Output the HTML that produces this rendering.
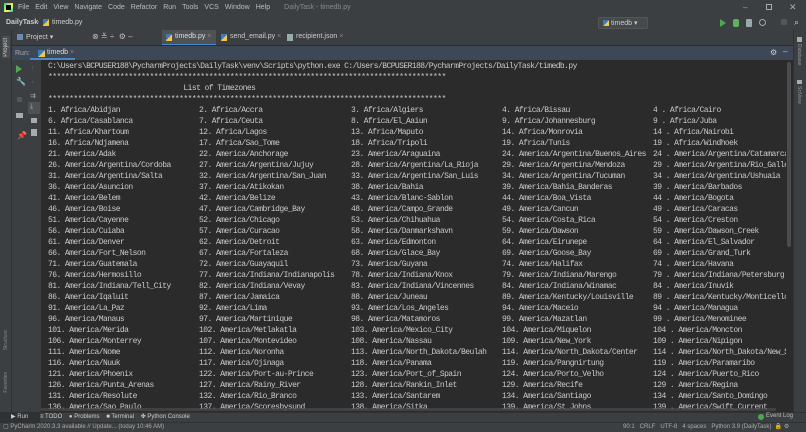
<!DOCTYPE html>
<html><head><meta charset="utf-8"><style>
*{margin:0;padding:0;box-sizing:border-box}
body{width:806px;height:432px;overflow:hidden;background:#3c3f41;font-family:"Liberation Sans",sans-serif;font-size:7px;color:#bbb;position:relative}
.abs{position:absolute}
.menu span{margin-right:6px}
#con{position:absolute;left:41px;top:60px;width:752px;height:352px;background:#2b2b2b;overflow:hidden}
.ln{position:absolute;left:7px;white-space:pre;font-family:"Liberation Mono",monospace;font-size:8px;letter-spacing:-0.57px;color:#c9c9c9;line-height:11px}
.r{position:absolute;height:11px;left:0;width:800px}
.r span{position:absolute;white-space:pre;font-family:"Liberation Mono",monospace;font-size:8px;letter-spacing:-0.57px;color:#c9c9c9;line-height:11px}
.c1{left:7px}.c2{left:158px}.c3{left:310px}.c4{left:461px}.c5{left:612px}
</style></head><body>
<div class="abs" style="left:0;top:0;width:806px;height:15px;background:#3c3f41"></div>
<div class="abs" style="left:4px;top:3px;width:9px;height:9px;background:linear-gradient(135deg,#21d789,#fcf84a 60%,#07c3f2)"><div style="margin:2px;width:5px;height:5px;background:#000"></div></div>
<div class="abs menu" style="left:18px;top:4px;color:#bbb">
<span>File</span><span>Edit</span><span>View</span><span>Navigate</span><span>Code</span><span>Refactor</span><span>Run</span><span>Tools</span><span>VCS</span><span>Window</span><span>Help</span><span style="color:#888;margin-left:8px">DailyTask - timedb.py</span></div>
<div class="abs" style="left:743px;top:3px;color:#aaa;font-size:8px">–</div>
<div class="abs" style="left:766px;top:4px;width:6px;height:6px;border:1px solid #aaa"></div>
<div class="abs" style="left:789px;top:2px;color:#aaa;font-size:9px">✕</div>
<div class="abs" style="left:6px;top:19px;color:#ccc;font-weight:bold">DailyTask</div>
<div class="abs" style="left:37px;top:19px;color:#888">›</div>
<div class="abs" style="left:43px;top:19px;width:6px;height:7px;background:linear-gradient(135deg,#3d7ab8 50%,#f3c744 50%)"></div>
<div class="abs" style="left:52px;top:19px;color:#ccc">timedb.py</div>
<div class="abs" style="left:598px;top:17px;width:50px;height:12px;border:1px solid #555;background:#45494a;border-radius:2px"></div>
<div class="abs" style="left:603px;top:20px;width:6px;height:6px;background:linear-gradient(135deg,#3d7ab8 50%,#f3c744 50%)"></div>
<div class="abs" style="left:611px;top:19px;color:#ccc">timedb ▾</div>
<div class="abs" style="left:720px;top:19px;width:0;height:0;border-left:6px solid #4fa84f;border-top:4px solid transparent;border-bottom:4px solid transparent"></div>
<div class="abs" style="left:733px;top:19px;width:6px;height:8px;background:#5fb35f;border-radius:2px"></div>
<div class="abs" style="left:746px;top:19px;width:6px;height:8px;background:#9aa;border-radius:1px"></div>
<div class="abs" style="left:759px;top:19px;width:7px;height:7px;border:1px solid #9aa;border-radius:50%"></div>
<div class="abs" style="left:781px;top:19px;width:6px;height:6px;background:#555"></div>
<div class="abs" style="left:794px;top:17px;color:#ccc;font-size:9px">⌕</div>
<div class="abs" style="left:0;top:30px;width:12px;height:402px;background:#3c3f41;border-right:1px solid #2f3133"></div>
<div class="abs" style="left:2px;top:36px;width:8px;height:22px;background:#4a4e52"></div>
<div class="abs" style="left:3px;top:38px;color:#ccc;font-size:6px;writing-mode:vertical-rl;transform:rotate(180deg)">Project</div>
<div class="abs" style="left:17px;top:34px;width:6px;height:6px;background:#6a8ab8"></div>
<div class="abs" style="left:26px;top:33px;color:#ccc">Project ▾</div>
<div class="abs" style="left:92px;top:32px;color:#bbb;font-size:8px">⊗ ≚ ÷ &nbsp;⚙ –</div>
<div class="abs" style="left:162px;top:30px;width:54px;height:16px;background:#4e5254;border-bottom:2px solid #4a88c7"></div>
<div class="abs" style="left:166px;top:34px;width:6px;height:7px;background:linear-gradient(135deg,#3d7ab8 50%,#f3c744 50%)"></div>
<div class="abs" style="left:175px;top:33px;color:#ddd">timedb.py <span style="color:#888">×</span></div>
<div class="abs" style="left:221px;top:34px;width:6px;height:7px;background:linear-gradient(135deg,#3d7ab8 50%,#f3c744 50%)"></div>
<div class="abs" style="left:230px;top:33px;color:#ccc">send_email.py <span style="color:#888">×</span></div>
<div class="abs" style="left:287px;top:34px;width:6px;height:7px;background:#9aa"></div>
<div class="abs" style="left:296px;top:33px;color:#ccc">recipient.json <span style="color:#888">×</span></div>
<div class="abs" style="left:12px;top:45px;width:781px;height:1px;background:#2b2b2b"></div>
<div class="abs" style="left:12px;top:46px;width:781px;height:14px;background:#3d4756"></div>
<div class="abs" style="left:15px;top:50px;color:#aaa">Run:</div>
<div class="abs" style="left:38px;top:50px;width:7px;height:7px;background:linear-gradient(135deg,#3d7ab8 50%,#f3c744 50%)"></div>
<div class="abs" style="left:47px;top:49px;color:#ddd">timedb <span style="color:#888">×</span></div>
<div class="abs" style="left:30px;top:58px;width:45px;height:2px;background:#4a88c7"></div>
<div class="abs" style="left:770px;top:48px;color:#ccc;font-size:8px">⚙</div>
<div class="abs" style="left:783px;top:47px;color:#ccc;font-size:8px">–</div>
<div class="abs" style="left:793px;top:30px;width:13px;height:382px;background:#3c3f41;border-left:1px solid #2f3133"></div>
<div class="abs" style="left:797px;top:37px;width:5px;height:5px;background:#aaa"></div>
<div class="abs" style="left:796px;top:44px;color:#999;font-size:5px;writing-mode:vertical-rl">Database</div>
<div class="abs" style="left:797px;top:80px;width:5px;height:4px;background:#aaa"></div>
<div class="abs" style="left:796px;top:86px;color:#999;font-size:5px;writing-mode:vertical-rl">SciView</div>
<div class="abs" style="left:16px;top:65px;width:0;height:0;border-left:6px solid #4fa84f;border-top:4px solid transparent;border-bottom:4px solid transparent"></div>
<div class="abs" style="left:16px;top:77px;color:#bbb;font-size:8px">🔧</div>
<div class="abs" style="left:17px;top:97px;width:5px;height:5px;background:#555"></div>
<div class="abs" style="left:16px;top:113px;width:7px;height:5px;background:#aaa"></div>
<div class="abs" style="left:17px;top:131px;color:#aaa;font-size:8px">📌</div>
<div class="abs" style="left:31px;top:65px;color:#666;font-size:7px">↑</div>
<div class="abs" style="left:31px;top:78px;color:#666;font-size:7px">↓</div>
<div class="abs" style="left:30px;top:92px;color:#aaa;font-size:7px">⇉</div>
<div class="abs" style="left:28px;top:102px;width:12px;height:12px;background:#4e5254"></div>
<div class="abs" style="left:30px;top:103px;color:#aaa;font-size:7px">⤓</div>
<div class="abs" style="left:31px;top:118px;width:6px;height:5px;background:#aaa"></div>
<div class="abs" style="left:31px;top:129px;width:6px;height:7px;background:#aaa"></div>
<div class="abs" style="left:3px;top:330px;color:#888;font-size:5px;writing-mode:vertical-rl;transform:rotate(180deg)">Structure</div>
<div class="abs" style="left:3px;top:372px;color:#888;font-size:5px;writing-mode:vertical-rl;transform:rotate(180deg)">Favorites</div>
<div id="con">
<div class="ln" style="top:1px">C:\Users\BCPUSER188\PycharmProjects\DailyTask\venv\Scripts\python.exe C:/Users/BCPUSER188/PycharmProjects/DailyTask/timedb.py</div>
<div class="ln" style="top:12px">**********************************************************************************************</div>
<div class="ln" style="top:23px">                                List of Timezones</div>
<div class="ln" style="top:34px">**********************************************************************************************</div>
<div class="r" style="top:45px"><span class="c1">1. Africa/Abidjan</span><span class="c2">2. Africa/Accra</span><span class="c3">3. Africa/Algiers</span><span class="c4">4. Africa/Bissau</span><span class="c5">4 . Africa/Cairo</span></div>
<div class="r" style="top:56px"><span class="c1">6. Africa/Casablanca</span><span class="c2">7. Africa/Ceuta</span><span class="c3">8. Africa/El_Aaiun</span><span class="c4">9. Africa/Johannesburg</span><span class="c5">9 . Africa/Juba</span></div>
<div class="r" style="top:67px"><span class="c1">11. Africa/Khartoum</span><span class="c2">12. Africa/Lagos</span><span class="c3">13. Africa/Maputo</span><span class="c4">14. Africa/Monrovia</span><span class="c5">14 . Africa/Nairobi</span></div>
<div class="r" style="top:78px"><span class="c1">16. Africa/Ndjamena</span><span class="c2">17. Africa/Sao_Tome</span><span class="c3">18. Africa/Tripoli</span><span class="c4">19. Africa/Tunis</span><span class="c5">19 . Africa/Windhoek</span></div>
<div class="r" style="top:89px"><span class="c1">21. America/Adak</span><span class="c2">22. America/Anchorage</span><span class="c3">23. America/Araguaina</span><span class="c4">24. America/Argentina/Buenos_Aires</span><span class="c5">24 . America/Argentina/Catamarca</span></div>
<div class="r" style="top:100px"><span class="c1">26. America/Argentina/Cordoba</span><span class="c2">27. America/Argentina/Jujuy</span><span class="c3">28. America/Argentina/La_Rioja</span><span class="c4">29. America/Argentina/Mendoza</span><span class="c5">29 . America/Argentina/Rio_Gallegos</span></div>
<div class="r" style="top:111px"><span class="c1">31. America/Argentina/Salta</span><span class="c2">32. America/Argentina/San_Juan</span><span class="c3">33. America/Argentina/San_Luis</span><span class="c4">34. America/Argentina/Tucuman</span><span class="c5">34 . America/Argentina/Ushuaia</span></div>
<div class="r" style="top:122px"><span class="c1">36. America/Asuncion</span><span class="c2">37. America/Atikokan</span><span class="c3">38. America/Bahia</span><span class="c4">39. America/Bahia_Banderas</span><span class="c5">39 . America/Barbados</span></div>
<div class="r" style="top:133px"><span class="c1">41. America/Belem</span><span class="c2">42. America/Belize</span><span class="c3">43. America/Blanc-Sablon</span><span class="c4">44. America/Boa_Vista</span><span class="c5">44 . America/Bogota</span></div>
<div class="r" style="top:144px"><span class="c1">46. America/Boise</span><span class="c2">47. America/Cambridge_Bay</span><span class="c3">48. America/Campo_Grande</span><span class="c4">49. America/Cancun</span><span class="c5">49 . America/Caracas</span></div>
<div class="r" style="top:155px"><span class="c1">51. America/Cayenne</span><span class="c2">52. America/Chicago</span><span class="c3">53. America/Chihuahua</span><span class="c4">54. America/Costa_Rica</span><span class="c5">54 . America/Creston</span></div>
<div class="r" style="top:166px"><span class="c1">56. America/Cuiaba</span><span class="c2">57. America/Curacao</span><span class="c3">58. America/Danmarkshavn</span><span class="c4">59. America/Dawson</span><span class="c5">59 . America/Dawson_Creek</span></div>
<div class="r" style="top:177px"><span class="c1">61. America/Denver</span><span class="c2">62. America/Detroit</span><span class="c3">63. America/Edmonton</span><span class="c4">64. America/Eirunepe</span><span class="c5">64 . America/El_Salvador</span></div>
<div class="r" style="top:188px"><span class="c1">66. America/Fort_Nelson</span><span class="c2">67. America/Fortaleza</span><span class="c3">68. America/Glace_Bay</span><span class="c4">69. America/Goose_Bay</span><span class="c5">69 . America/Grand_Turk</span></div>
<div class="r" style="top:199px"><span class="c1">71. America/Guatemala</span><span class="c2">72. America/Guayaquil</span><span class="c3">73. America/Guyana</span><span class="c4">74. America/Halifax</span><span class="c5">74 . America/Havana</span></div>
<div class="r" style="top:210px"><span class="c1">76. America/Hermosillo</span><span class="c2">77. America/Indiana/Indianapolis</span><span class="c3">78. America/Indiana/Knox</span><span class="c4">79. America/Indiana/Marengo</span><span class="c5">79 . America/Indiana/Petersburg</span></div>
<div class="r" style="top:221px"><span class="c1">81. America/Indiana/Tell_City</span><span class="c2">82. America/Indiana/Vevay</span><span class="c3">83. America/Indiana/Vincennes</span><span class="c4">84. America/Indiana/Winamac</span><span class="c5">84 . America/Inuvik</span></div>
<div class="r" style="top:232px"><span class="c1">86. America/Iqaluit</span><span class="c2">87. America/Jamaica</span><span class="c3">88. America/Juneau</span><span class="c4">89. America/Kentucky/Louisville</span><span class="c5">89 . America/Kentucky/Monticello</span></div>
<div class="r" style="top:243px"><span class="c1">91. America/La_Paz</span><span class="c2">92. America/Lima</span><span class="c3">93. America/Los_Angeles</span><span class="c4">94. America/Maceio</span><span class="c5">94 . America/Managua</span></div>
<div class="r" style="top:254px"><span class="c1">96. America/Manaus</span><span class="c2">97. America/Martinique</span><span class="c3">98. America/Matamoros</span><span class="c4">99. America/Mazatlan</span><span class="c5">99 . America/Menominee</span></div>
<div class="r" style="top:265px"><span class="c1">101. America/Merida</span><span class="c2">102. America/Metlakatla</span><span class="c3">103. America/Mexico_City</span><span class="c4">104. America/Miquelon</span><span class="c5">104 . America/Moncton</span></div>
<div class="r" style="top:276px"><span class="c1">106. America/Monterrey</span><span class="c2">107. America/Montevideo</span><span class="c3">108. America/Nassau</span><span class="c4">109. America/New_York</span><span class="c5">109 . America/Nipigon</span></div>
<div class="r" style="top:287px"><span class="c1">111. America/Nome</span><span class="c2">112. America/Noronha</span><span class="c3">113. America/North_Dakota/Beulah</span><span class="c4">114. America/North_Dakota/Center</span><span class="c5">114 . America/North_Dakota/New_Salem</span></div>
<div class="r" style="top:298px"><span class="c1">116. America/Nuuk</span><span class="c2">117. America/Ojinaga</span><span class="c3">118. America/Panama</span><span class="c4">119. America/Pangnirtung</span><span class="c5">119 . America/Paramaribo</span></div>
<div class="r" style="top:309px"><span class="c1">121. America/Phoenix</span><span class="c2">122. America/Port-au-Prince</span><span class="c3">123. America/Port_of_Spain</span><span class="c4">124. America/Porto_Velho</span><span class="c5">124 . America/Puerto_Rico</span></div>
<div class="r" style="top:320px"><span class="c1">126. America/Punta_Arenas</span><span class="c2">127. America/Rainy_River</span><span class="c3">128. America/Rankin_Inlet</span><span class="c4">129. America/Recife</span><span class="c5">129 . America/Regina</span></div>
<div class="r" style="top:331px"><span class="c1">131. America/Resolute</span><span class="c2">132. America/Rio_Branco</span><span class="c3">133. America/Santarem</span><span class="c4">134. America/Santiago</span><span class="c5">134 . America/Santo_Domingo</span></div>
<div class="r" style="top:342px"><span class="c1">136. America/Sao_Paulo</span><span class="c2">137. America/Scoresbysund</span><span class="c3">138. America/Sitka</span><span class="c4">139. America/St_Johns</span><span class="c5">139 . America/Swift_Current</span></div>
<div class="abs" style="left:0;top:348px;width:735px;height:3px;background:#4a4c4e;opacity:.7"></div>
<div class="abs" style="left:745px;top:0;width:7px;height:352px;background:#2b2b2b"></div>
<div class="abs" style="left:746px;top:2px;width:4px;height:185px;background:#4a4c4e;border-radius:2px"></div>
</div>
<div class="abs" style="left:0;top:412px;width:806px;height:10px;background:#3c3f41;border-top:1px solid #323232"></div>
<div class="abs" style="left:0;top:412px;width:40px;height:10px;background:#2f3235"></div>
<div class="abs" style="left:11px;top:413px;font-size:6px;color:#ccc;white-space:nowrap">▶ Run &nbsp;&nbsp;&nbsp;&nbsp;&nbsp;&nbsp;≡ TODO &nbsp;&nbsp;&nbsp;● Problems &nbsp;&nbsp;&nbsp;■ Terminal &nbsp;&nbsp;&nbsp;✤ Python Console</div>
<div class="abs" style="left:758px;top:414px;width:6px;height:6px;border-radius:50%;background:#4fa84f"></div>
<div class="abs" style="left:766px;top:413px;font-size:6px;color:#bbb;white-space:nowrap">Event Log</div>
<div class="abs" style="left:0;top:422px;width:806px;height:10px;background:#3c3f41;border-top:1px solid #323232"></div>
<div class="abs" style="left:3px;top:423px;font-size:6px;color:#aaa;white-space:nowrap">▢ PyCharm 2020.3.3 available // Update... (today 10:46 AM)</div>
<div class="abs" style="left:623px;top:423px;font-size:6px;color:#aaa;white-space:nowrap">90:1 &nbsp;&nbsp;CRLF &nbsp;&nbsp;UTF-8 &nbsp;&nbsp;4 spaces &nbsp;&nbsp;Python 3.9 (DailyTask) &nbsp;🔒 ⚙</div>
</body></html>
